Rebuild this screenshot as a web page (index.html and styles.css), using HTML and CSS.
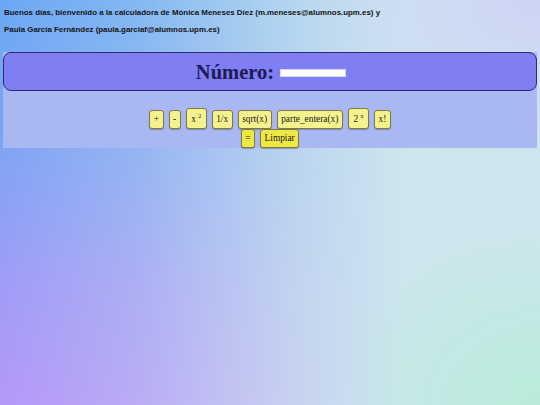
FILE: index.html
```html
<!DOCTYPE html>
<html lang="es">
<head>
<meta charset="utf-8">
<title>Calculadora</title>
<link rel="stylesheet" href="styles.css">
</head>
<body>
<p class="intro">Buenos días, bienvenido a la calculadora de Mónica Meneses Díez (m.meneses@alumnos.upm.es) y</p>
<p class="intro">Paula García Fernández (paula.garciaf@alumnos.upm.es)</p>
<main class="calc">
  <header class="display">
    <h1 class="title">Número: <input class="num" type="text"></h1>
  </header>
  <div class="keys">
    <button class="key">+</button>
    <button class="key">-</button>
    <button class="key key-pow">x <sup>2</sup></button>
    <button class="key">1/x</button>
    <button class="key">sqrt(x)</button>
    <button class="key">parte_entera(x)</button>
    <button class="key key-pow">2 <sup>x</sup></button>
    <button class="key">x!</button>
    <span class="break"></span>
    <button class="key key-strong">=</button>
    <button class="key key-strong">Limpiar</button>
  </div>
</main>
</body>
</html>
```
FILE: styles.css
```css
html {
  min-height: 100%;
  background:
    radial-gradient(ellipse 40% 45% at 100% 100%, rgba(184,236,218,1) 0%, rgba(184,236,218,0) 100%),
    radial-gradient(ellipse 45% 40% at 100% 0%, rgba(206,212,245,1) 0%, rgba(206,212,245,0) 100%),
    linear-gradient(90deg, rgba(206,230,238,0) 0%, rgba(206,230,238,0.25) 25%, rgba(206,230,238,0.75) 55%, rgba(206,230,238,1) 75%),
    linear-gradient(180deg, #6aa8f4 0%, #7ea4f4 35%, #a09cf6 70%, #b498f8 100%);
  background-attachment: fixed;
}
body {
  margin: 0;
  padding: 8px 0 0;
  min-height: 397px;
  font-family: "Liberation Sans", Arial, sans-serif;
}
.intro {
  margin: 0 4px 8px;
  font-size: 7.9px;
  line-height: 9px;
  font-weight: bold;
  color: #141414;
}
.calc {
  margin: 18px 3px 0;
  background: #a9b8f2;
}
.display {
  background: #7f7ef2;
  border: 1px solid #2c2a6a;
  border-radius: 8px;
  height: 37px;
  display: flex;
  align-items: center;
  justify-content: center;
}
.title {
  margin: 0;
  font-family: "Liberation Serif", "Times New Roman", serif;
  font-size: 20.5px;
  font-weight: bold;
  color: #1d1b55;
  line-height: 24px;
  padding-left: 2px;
}
.num {
  width: 64px;
  height: 6px;
  padding: 0;
  border: 1px solid #d8d8f0;
  background: #fff;
  vertical-align: 1px;
  margin-left: 1px;
}
.keys {
  display: flex;
  flex-wrap: wrap;
  justify-content: center;
  align-items: flex-end;
  column-gap: 5px;
  row-gap: 0;
  padding-top: 17px;
}
.break {
  flex-basis: 100%;
  height: 0;
}
.key {
  font-family: "Liberation Serif", "Times New Roman", serif;
  font-size: 9.4px;
  line-height: 11px;
  color: #222;
  background: #f3f28c;
  border: 1px solid #7d7a4a;
  border-radius: 3px;
  padding: 3px 3.5px;
  box-shadow: 0 1px 1px rgba(60,60,30,0.35);
  margin: 0;
}
.key-pow {
  padding-top: 5px;
  padding-left: 4.5px;
  padding-right: 4.5px;
}
.key sup {
  font-size: 6px;
  line-height: 0;
  vertical-align: 4px;
}
.key-strong {
  background: #efe843;
}
```
